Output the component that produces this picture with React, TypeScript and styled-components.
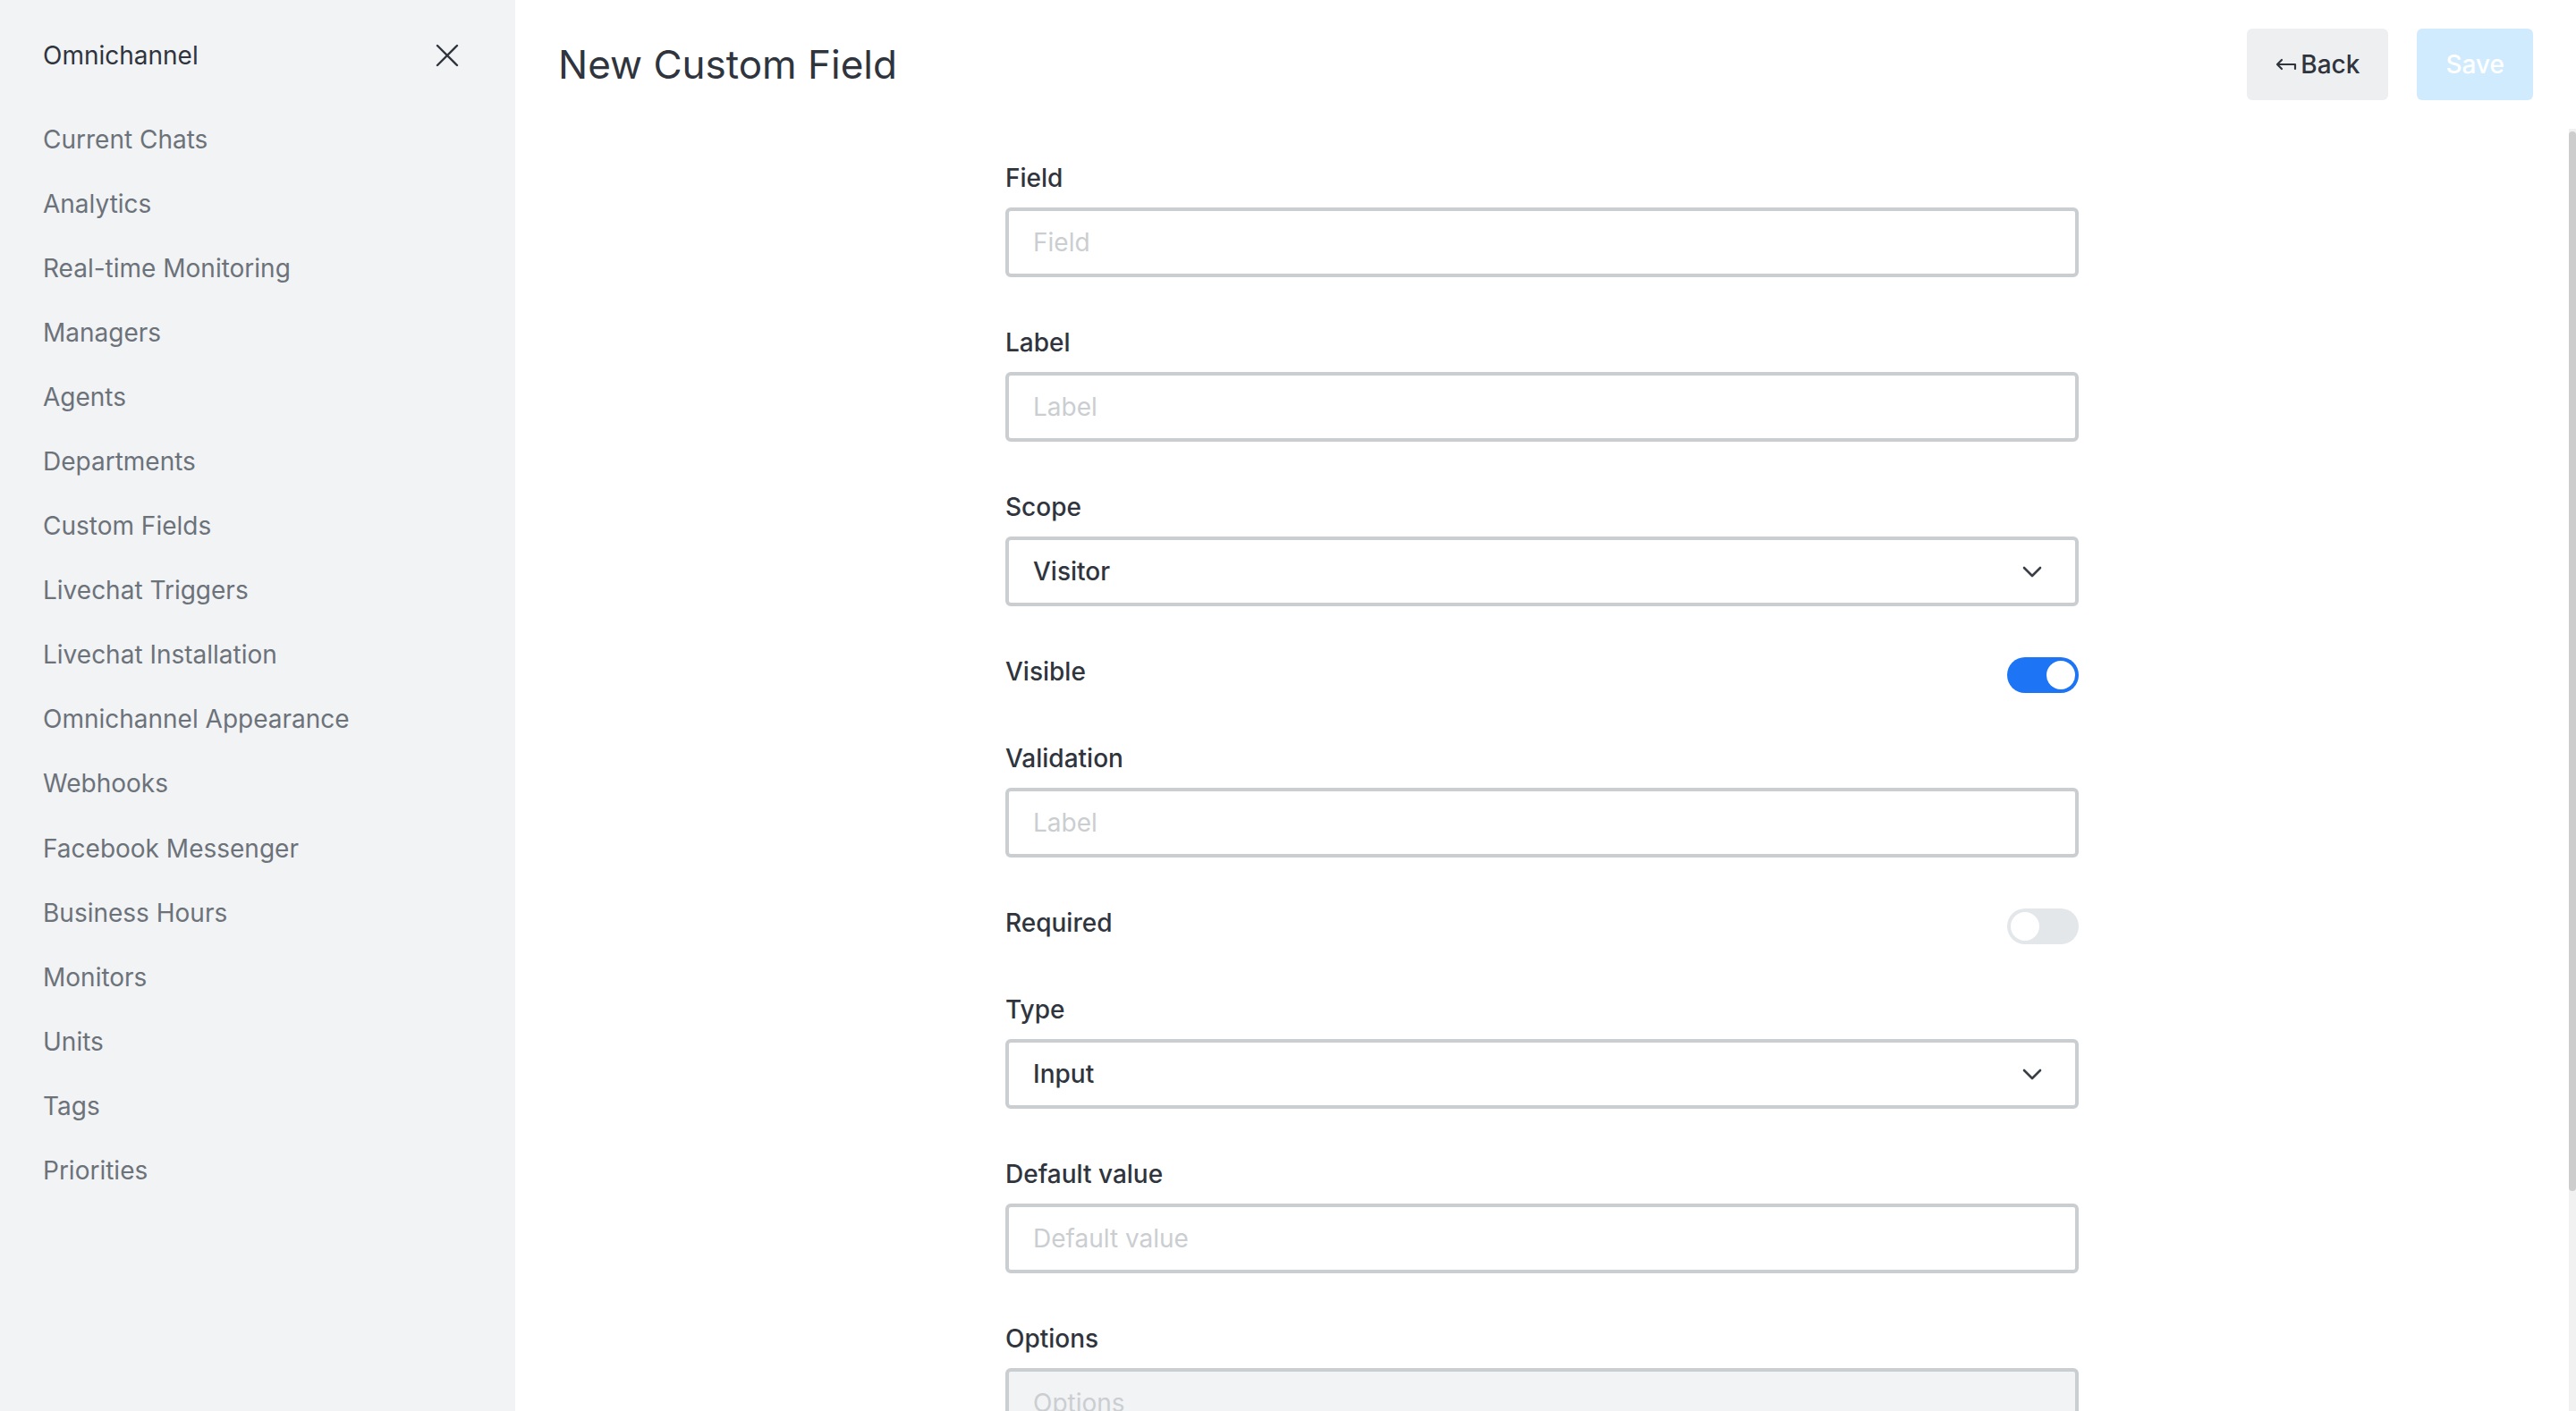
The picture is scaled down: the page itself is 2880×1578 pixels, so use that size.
import React from "react";
import styled, { createGlobalStyle } from "styled-components";

const GlobalStyle = createGlobalStyle`
  html, body {
    margin: 0;
    padding: 0;
    height: 100%;
    background: #ffffff;
    font-family: Inter, "Noto Sans", "Liberation Sans", sans-serif;
    color: #2f343d;
    -webkit-font-smoothing: antialiased;
  }
  #root { height: 100%; }
  * { box-sizing: border-box; }
`;

const Shell = styled.div`
  display: flex;
  height: 100vh;
  width: 100%;
  overflow: hidden;
`;

const Sidebar = styled.aside`
  width: 576px;
  flex: 0 0 576px;
  background: #f2f3f5;
  display: flex;
  flex-direction: column;
`;

const SidebarHeader = styled.div`
  height: 120px;
  display: flex;
  align-items: center;
  justify-content: space-between;
  padding: 4px 63px 0 48px;
`;

const SidebarTitle = styled.h1`
  margin: 0;
  font-size: 28px;
  line-height: 40px;
  font-weight: 400;
  color: #2f343d;
`;

const CloseButton = styled.button`
  border: 0;
  background: transparent;
  padding: 0;
  display: flex;
  align-items: center;
  justify-content: center;
  color: #2f343d;
  cursor: pointer;
`;

const NavList = styled.nav`
  display: flex;
  flex-direction: column;
`;

const NavItem = styled.a`
  height: 72.06px;
  display: flex;
  align-items: center;
  padding-left: 48px;
  font-size: 28px;
  color: #6c727a;
  text-decoration: none;
`;

const Main = styled.main`
  position: relative;
  flex: 1;
  min-width: 0;
  display: flex;
  flex-direction: column;
  background: #ffffff;
`;

const PageHeader = styled.header`
  height: 144px;
  flex: 0 0 144px;
  display: flex;
  align-items: center;
  justify-content: space-between;
  padding: 0 48px;
`;

const PageTitle = styled.h2`
  margin: 0;
  font-size: 44px;
  line-height: 64px;
  font-weight: 400;
  color: #2f343d;
`;

const ButtonGroup = styled.div`
  display: flex;
  gap: 32px;
`;

const Button = styled.button<{ $primary?: boolean }>`
  height: 80px;
  padding: 0 32px;
  border: 0;
  border-radius: 6px;
  display: flex;
  align-items: center;
  gap: 4px;
  font-family: inherit;
  font-size: 28px;
  font-weight: 500;
  background: ${(p) => (p.$primary ? "#d1ebfe" : "#eeeff1")};
  color: ${(p) => (p.$primary ? "#ffffff" : "#2f343d")};
`;

const ScrollArea = styled.div`
  flex: 1;
  overflow-y: auto;
  padding: 34px 56px 272px 48px;
  scrollbar-width: none;
  &::-webkit-scrollbar {
    display: none;
  }
`;

/* decorative scrollbar overlay drawn at the right edge of the scroll area */
const ScrollTrack = styled.div`
  position: absolute;
  top: 144px;
  right: 0;
  bottom: 0;
  width: 8px;
  background: #f1f1f1;
`;

const ScrollThumb = styled.div`
  margin-top: 3px;
  height: 1185px;
  border-radius: 4px;
  background: #cdcdcd;
`;

const Form = styled.form`
  max-width: 1200px;
  margin: 0 auto;
  display: flex;
  flex-direction: column;
  gap: 52px;
`;

const FieldGroup = styled.div`
  display: flex;
  flex-direction: column;
  gap: 14px;
`;

const ToggleRow = styled.div`
  display: flex;
  align-items: flex-start;
  justify-content: space-between;
`;

const Label = styled.label`
  padding-top: 2px;
  font-size: 28px;
  line-height: 38px;
  font-weight: 500;
  color: #2f343d;
`;

const TextInput = styled.input`
  height: 78px;
  width: 100%;
  border: 4px solid #cbced1;
  border-radius: 6px;
  padding: 0 27px;
  font-family: inherit;
  font-size: 28px;
  color: #2f343d;
  background: ${(p) => (p.disabled ? "#f2f3f5" : "#ffffff")};
  outline: none;

  &::placeholder {
    color: #cbced1;
  }
`;

const SelectBox = styled.div`
  height: 78px;
  border: 4px solid #cbced1;
  border-radius: 6px;
  padding: 0 36px 0 27px;
  display: flex;
  align-items: center;
  justify-content: space-between;
  font-size: 28px;
  font-weight: 500;
  color: #2f343d;
  background: #ffffff;
`;

const Toggle = styled.span<{ $on?: boolean }>`
  margin-top: 5px;
  width: 80px;
  height: 40px;
  border-radius: 20px;
  padding: 4px;
  display: flex;
  justify-content: ${(p) => (p.$on ? "flex-end" : "flex-start")};
  background: ${(p) => (p.$on ? "#1d74f5" : "#e4e7ea")};
`;

const Knob = styled.span`
  width: 32px;
  height: 32px;
  border-radius: 50%;
  background: #ffffff;
`;

const navItems = [
  "Current Chats",
  "Analytics",
  "Real-time Monitoring",
  "Managers",
  "Agents",
  "Departments",
  "Custom Fields",
  "Livechat Triggers",
  "Livechat Installation",
  "Omnichannel Appearance",
  "Webhooks",
  "Facebook Messenger",
  "Business Hours",
  "Monitors",
  "Units",
  "Tags",
  "Priorities",
];

const CloseIcon = () => (
  <svg width="26" height="26" viewBox="0 0 26 26" fill="none">
    <path d="M2 2L24 24M24 2L2 24" stroke="currentColor" strokeWidth="2.4" strokeLinecap="round" />
  </svg>
);

const BackArrow = () => (
  <svg width="24" height="20" viewBox="0 0 24 20" fill="none">
    <path d="M7 5L2 10L7 15M2 10H22V15" stroke="currentColor" strokeWidth="2.2" strokeLinecap="round" strokeLinejoin="round" />
  </svg>
);

const Chevron = () => (
  <svg width="24" height="24" viewBox="0 0 24 24" fill="none">
    <path d="M3 8L12 17L21 8" stroke="#3a3f47" strokeWidth="2.6" strokeLinecap="round" strokeLinejoin="round" />
  </svg>
);

const TextField = ({ label, placeholder, disabled }: { label: string; placeholder: string; disabled?: boolean }) => (
  <FieldGroup>
    <Label>{label}</Label>
    <TextInput placeholder={placeholder} disabled={disabled} />
  </FieldGroup>
);

const SelectField = ({ label, value }: { label: string; value: string }) => (
  <FieldGroup>
    <Label>{label}</Label>
    <SelectBox>
      <span>{value}</span>
      <Chevron />
    </SelectBox>
  </FieldGroup>
);

const ToggleField = ({ label, on }: { label: string; on?: boolean }) => (
  <ToggleRow>
    <Label>{label}</Label>
    <Toggle $on={on}>
      <Knob />
    </Toggle>
  </ToggleRow>
);

export default function App() {
  return (
    <>
      <GlobalStyle />
      <Shell>
        <Sidebar>
          <SidebarHeader>
            <SidebarTitle>Omnichannel</SidebarTitle>
            <CloseButton aria-label="Close">
              <CloseIcon />
            </CloseButton>
          </SidebarHeader>
          <NavList>
            {navItems.map((item) => (
              <NavItem key={item}>{item}</NavItem>
            ))}
          </NavList>
        </Sidebar>
        <Main>
          <PageHeader>
            <PageTitle>New Custom Field</PageTitle>
            <ButtonGroup>
              <Button>
                <BackArrow />
                Back
              </Button>
              <Button $primary>Save</Button>
            </ButtonGroup>
          </PageHeader>
          <ScrollArea>
            <Form onSubmit={(e) => e.preventDefault()}>
              <TextField label="Field" placeholder="Field" />
              <TextField label="Label" placeholder="Label" />
              <SelectField label="Scope" value="Visitor" />
              <ToggleField label="Visible" on />
              <TextField label="Validation" placeholder="Label" />
              <ToggleField label="Required" />
              <SelectField label="Type" value="Input" />
              <TextField label="Default value" placeholder="Default value" />
              <TextField label="Options" placeholder="Options" disabled />
            </Form>
          </ScrollArea>
          <ScrollTrack>
            <ScrollThumb />
          </ScrollTrack>
        </Main>
      </Shell>
    </>
  );
}
